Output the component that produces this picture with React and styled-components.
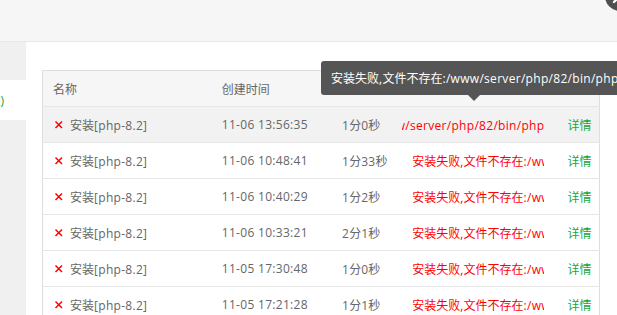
import React from "react";
import styled, { createGlobalStyle } from "styled-components";

const GlobalStyle = createGlobalStyle`
  html, body { margin: 0; padding: 0; background: #fff; }
  body { font-family: "Open Sans", "Noto Sans CJK SC", sans-serif; font-size: 12px; color: #666; }
`;

const Dialog = styled.div`
  position: relative;
  width: 617px;
  height: 315px;
  overflow: hidden;
  display: flex;
  flex-direction: column;
  background: #fff;
`;

const TitleBar = styled.div`
  height: 41px;
  flex: none;
  background: #f6f6f6;
  border-bottom: 1px solid #e8e8e8;
`;

const CloseBtn = styled.div`
  position: absolute;
  left: 605px;
  top: -19px;
  width: 30px;
  height: 30px;
  border-radius: 50%;
  background: #4f4f4f;
  display: flex;
  align-items: center;
  justify-content: center;
`;

const Body = styled.div`
  flex: 1;
  display: flex;
  min-height: 0;
`;

const Sidebar = styled.div`
  width: 26px;
  flex: none;
  background: #f0f0f0;
  padding-top: 38px;
  overflow: hidden;
`;

const SideItem = styled.div`
  height: 40px;
  display: flex;
  align-items: center;
  justify-content: flex-end;
  padding-right: 22px;
  white-space: nowrap;
  background: ${(p) => (p.$active ? "#fff" : "transparent")};
  color: ${(p) => (p.$active ? "#20a53a" : "#555")};
  font-size: 12px;
`;

const Content = styled.div`
  flex: 1;
  padding: 28px 18px 0 16px;
`;

const Table = styled.table`
  border-collapse: collapse;
  table-layout: fixed;
  width: 558px;
  border: 1px solid #dedede;
`;

const HeadCell = styled.th`
  height: 35px;
  padding: 0 10px;
  text-align: left;
  font-weight: normal;
  color: #666;
  background: #f6f6f6;
  border-bottom: 1px solid #e6e6e6;
  white-space: nowrap;
`;

const Row = styled.tr`
  background: ${(p) => (p.$hover ? "#f2f2f2" : "#fff")};
`;

const Cell = styled.td`
  height: 35px;
  padding: 0 ${(p) => p.$pr ?? 10}px 0 ${(p) => p.$pl ?? 10}px;
  border-bottom: 1px solid #e6e6e6;
  white-space: nowrap;
  overflow: hidden;
  color: #666;
`;

const NameWrap = styled.div`
  display: flex;
  align-items: center;
`;

const FailIcon = styled.svg`
  width: 12px;
  height: 12px;
  margin-right: 5px;
  flex: none;
`;

const StatusText = styled.div`
  display: flex;
  justify-content: ${(p) => (p.$scrolled ? "flex-end" : "flex-start")};
  padding-left: ${(p) => (p.$scrolled ? 0 : 10)}px;
  overflow: hidden;
  white-space: nowrap;
  color: #f00;
`;

const Detail = styled.span`
  color: #20a53a;
`;

const Latin = styled.span`
  letter-spacing: 0.3px;
`;

const Tip = styled.div`
  position: absolute;
  left: 321px;
  top: 61px;
  height: 34px;
  padding: 0 10px;
  display: flex;
  align-items: center;
  background: #555;
  color: #fff;
  border-radius: 3px;
  white-space: nowrap;
  font-size: 12px;
  &::after {
    content: "";
    position: absolute;
    left: 147px;
    bottom: -6px;
    border-left: 6px solid transparent;
    border-right: 6px solid transparent;
    border-top: 6px solid #555;
  }
`;

function Txt({ children }) {
  const parts = String(children).split(/([\u3000-\u9fff\uff00-\uffef]+)/);
  return (
    <span>
      {parts.map((p, i) =>
        p === "" ? null : /[\u3000-\u9fff\uff00-\uffef]/.test(p) ? (
          <React.Fragment key={i}>{p}</React.Fragment>
        ) : (
          <Latin key={i}>{p}</Latin>
        )
      )}
    </span>
  );
}

const msg = "安装失败,文件不存在:/www/server/php/82/bin/php";

const rows = [
  { time: "11-06 13:56:35", dur: "1分0秒", hover: true },
  { time: "11-06 10:48:41", dur: "1分33秒" },
  { time: "11-06 10:40:29", dur: "1分2秒" },
  { time: "11-06 10:33:21", dur: "2分1秒" },
  { time: "11-05 17:30:48", dur: "1分0秒" },
  { time: "11-05 17:21:28", dur: "1分1秒" },
];

export default function App() {
  return (
    <>
      <GlobalStyle />
      <Dialog>
        <TitleBar />
        <CloseBtn>
          <svg width="30" height="30" viewBox="0 0 30 30">
            <path d="M9 9 L21 21 M21 9 L9 21" stroke="#fff" strokeWidth="2.4" strokeLinecap="round" />
          </svg>
        </CloseBtn>
        <Body>
          <Sidebar>
            <SideItem $active>PHP-8.2(已安装)</SideItem>
          </Sidebar>
          <Content>
            <Table>
              <colgroup>
                <col style={{ width: 169 }} />
                <col style={{ width: 120 }} />
                <col style={{ width: 70 }} />
                <col style={{ width: 155 }} />
                <col style={{ width: 42 }} />
              </colgroup>
              <thead>
                <tr>
                  <HeadCell>名称</HeadCell>
                  <HeadCell>创建时间</HeadCell>
                  <HeadCell>耗时</HeadCell>
                  <HeadCell>状态</HeadCell>
                  <HeadCell>操作</HeadCell>
                </tr>
              </thead>
              <tbody>
                {rows.map((r, i) => (
                  <Row key={i} $hover={r.hover}>
                    <Cell>
                      <NameWrap>
                        <FailIcon viewBox="0 0 12 12">
                          <path d="M2.5 2.5 L9 9 M9 2.5 L2.5 9" stroke="#f00" strokeWidth="1.5" />
                        </FailIcon>
                        <Txt>安装[php-8.2]</Txt>
                      </NameWrap>
                    </Cell>
                    <Cell><Txt>{r.time}</Txt></Cell>
                    <Cell><Txt>{r.dur}</Txt></Cell>
                    <Cell $pl={0} $pr={13}>
                      <StatusText $scrolled={r.hover}><Txt>{msg}</Txt></StatusText>
                    </Cell>
                    <Cell>
                      <Detail>详情</Detail>
                    </Cell>
                  </Row>
                ))}
              </tbody>
            </Table>
          </Content>
        </Body>
        <Tip><Txt>{msg}</Txt></Tip>
      </Dialog>
    </>
  );
}
